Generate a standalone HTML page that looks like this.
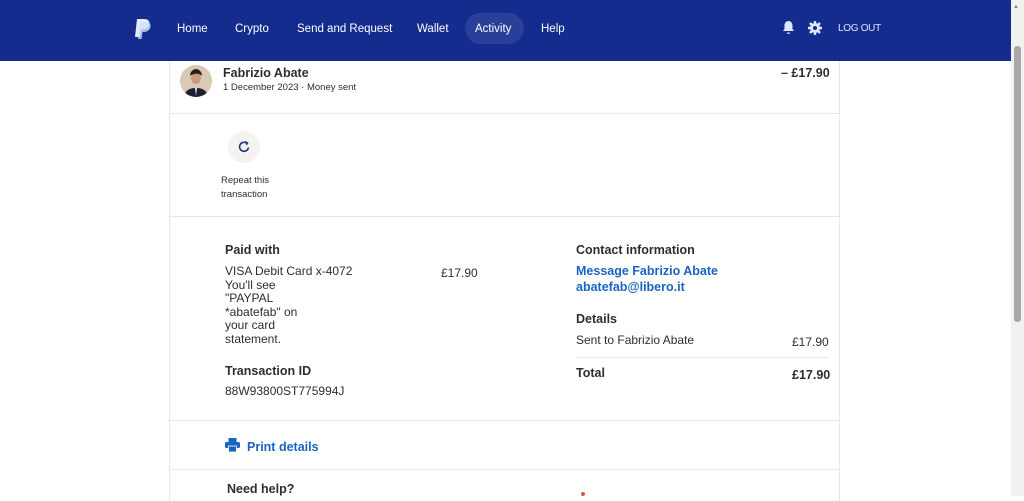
<!DOCTYPE html>
<html><head><meta charset="utf-8"><style>
*{margin:0;padding:0;box-sizing:border-box}
body{width:1024px;height:496px;overflow:hidden;background:#fff;font-family:"Liberation Sans",sans-serif;color:#2c2e2f;position:relative}
.hdr{position:absolute;left:0;top:0;width:1011px;height:61px;background:#142c8e}
.nav{position:absolute;top:0;height:61px;line-height:58px;color:#fff;font-size:11.5px}
.act{position:absolute;left:465px;top:13px;width:59px;height:31px;border-radius:16px;background:#2a3f9a}
.sb{position:absolute;left:1011px;top:0;width:13px;height:496px;background:#f1f1f1}
.thumb{position:absolute;left:1014px;top:46px;width:7px;height:276px;background:#a8a8a8;border-radius:3px}
.card{position:absolute;left:169px;top:61px;width:671px;height:440px;border-left:1px solid #e8e8e8;border-right:1px solid #e8e8e8}
.hr{position:absolute;left:170px;width:669px;height:1px;background:#e8e8e8}
.t{position:absolute;white-space:nowrap}
.b{font-weight:bold}
.blue{color:#1a65c0;font-weight:bold}
</style></head><body>
<div class="hdr">
<svg style="position:absolute;left:134px;top:18px" width="18" height="22" viewBox="0 0 18 22"><path d="M3 1h7c4 0 6 2 5.5 5.5C15 10 12 11.5 9 11.5H7L5.5 19H1z" fill="#fff" opacity=".9"/><path d="M6 4h6c3 0 5 1.5 4.5 5C16 12 13 14 10 14H8.5L7.5 21H4z" fill="#cfe0ff" opacity=".8"/></svg>
<div class="act"></div>
<div class="nav" style="left:177px">Home</div>
<div class="nav" style="left:235px">Crypto</div>
<div class="nav" style="left:297px">Send and Request</div>
<div class="nav" style="left:417px">Wallet</div>
<div class="nav" style="left:475px">Activity</div>
<div class="nav" style="left:541px">Help</div>
<svg style="position:absolute;left:782px;top:20px" width="13" height="15" viewBox="0 0 13 15"><path d="M6.5 1C4 1 2.5 3 2.5 5.5V9L1 11h11l-1.5-2V5.5C10.5 3 9 1 6.5 1z M5 12.5h3a1.5 1.5 0 0 1-3 0z" fill="#dbe6ff"/></svg>
<svg style="position:absolute;left:808px;top:21px" width="14" height="14" viewBox="0 0 14 14"><circle cx="7" cy="7" r="5" fill="#dbe6ff"/><g stroke="#dbe6ff" stroke-width="2.4"><path d="M7 0v14M0 7h14M2 2l10 10M12 2L2 12"/></g><circle cx="7" cy="7" r="2" fill="#142c8e"/></svg>
<div class="nav" style="left:838px;font-size:10px;letter-spacing:-0.3px;color:#dbe6ff">LOG OUT</div>
</div>
<div class="sb"></div><div class="thumb"></div>
<div style="position:absolute;left:1013px;top:4px;font-size:6px;color:#888">▲</div>
<div class="card"></div>
<svg style="position:absolute;left:180px;top:65px" width="32" height="32" viewBox="0 0 32 32"><defs><clipPath id="c"><circle cx="16" cy="16" r="16"/></clipPath></defs><g clip-path="url(#c)"><rect width="32" height="32" fill="#d9c9b5"/><path d="M4 32c1-7 6-9 12-9s11 2 12 9z" fill="#1d2030"/><ellipse cx="16" cy="13" rx="5" ry="6" fill="#c89a80"/><path d="M10 11c0-5 4-7 6-7s6 2 6 7c-2-3-9-3-12 0z" fill="#2a1e18"/><path d="M15 23h2l-1 8z" fill="#eee"/></g></svg>
<div class="t b" style="left:223px;top:66px;font-size:12.5px">Fabrizio Abate</div>
<div class="t" style="left:223px;top:82px;font-size:9.5px">1 December 2023 · Money sent</div>
<div class="t b" style="left:781px;top:66px;font-size:12.5px">– £17.90</div>
<div class="hr" style="top:113px"></div>
<div style="position:absolute;left:228px;top:131px;width:32px;height:32px;border-radius:50%;background:#f5f3ef"></div>
<svg style="position:absolute;left:237px;top:140px" width="14" height="14" viewBox="0 0 14 14"><path d="M11.5 7.5A4.5 4.5 0 1 1 9.5 3" fill="none" stroke="#1e3a7a" stroke-width="1.6"/><path d="M8 0.8l3.6 1.8-2 3.2z" fill="#1e3a7a"/></svg>
<div class="t" style="left:221px;top:174px;font-size:9.5px;line-height:14px">Repeat this<br>transaction</div>
<div class="hr" style="top:216px"></div>
<div class="t b" style="left:225px;top:243px;font-size:12.5px">Paid with</div>
<div class="t" style="left:225px;top:265px;font-size:12px;line-height:13.5px">VISA Debit Card x-4072<br>You'll see<br>"PAYPAL<br>*abatefab" on<br>your card<br>statement.</div>
<div class="t" style="left:441px;top:266px;font-size:12px">£17.90</div>
<div class="t b" style="left:225px;top:364px;font-size:12.5px">Transaction ID</div>
<div class="t" style="left:225px;top:384px;font-size:12px">88W93800ST775994J</div>
<div class="t b" style="left:576px;top:243px;font-size:12.5px">Contact information</div>
<div class="t blue" style="left:576px;top:264px;font-size:12.5px">Message Fabrizio Abate</div>
<div class="t blue" style="left:576px;top:280px;font-size:12.5px">abatefab@libero.it</div>
<div class="t b" style="left:576px;top:312px;font-size:12.5px">Details</div>
<div class="t" style="left:576px;top:333px;font-size:12px">Sent to Fabrizio Abate</div>
<div class="t" style="left:792px;top:335px;font-size:12px">£17.90</div>
<div style="position:absolute;left:576px;top:357px;width:252px;height:1px;background:#e8e8e8"></div>
<div class="t b" style="left:576px;top:366px;font-size:12.5px">Total</div>
<div class="t b" style="left:792px;top:368px;font-size:12.5px">£17.90</div>
<div class="hr" style="top:420px"></div>
<svg style="position:absolute;left:225px;top:438px" width="15" height="14" viewBox="0 0 15 14"><rect x="3.5" y="0" width="8" height="4" fill="#1a65c0"/><rect x="0" y="4" width="15" height="6" rx="1.5" fill="#1a65c0"/><rect x="3.5" y="8" width="8" height="6" fill="#1a65c0" stroke="#fff" stroke-width=".8"/></svg>
<div class="t blue" style="left:247px;top:440px;font-size:12.5px">Print details</div>
<div class="hr" style="top:469px"></div>
<div class="t b" style="left:227px;top:482px;font-size:12.5px">Need help?</div>
<div style="position:absolute;left:581px;top:492px;width:4px;height:4px;background:#d9534f;border-radius:2px"></div>
</body></html>
